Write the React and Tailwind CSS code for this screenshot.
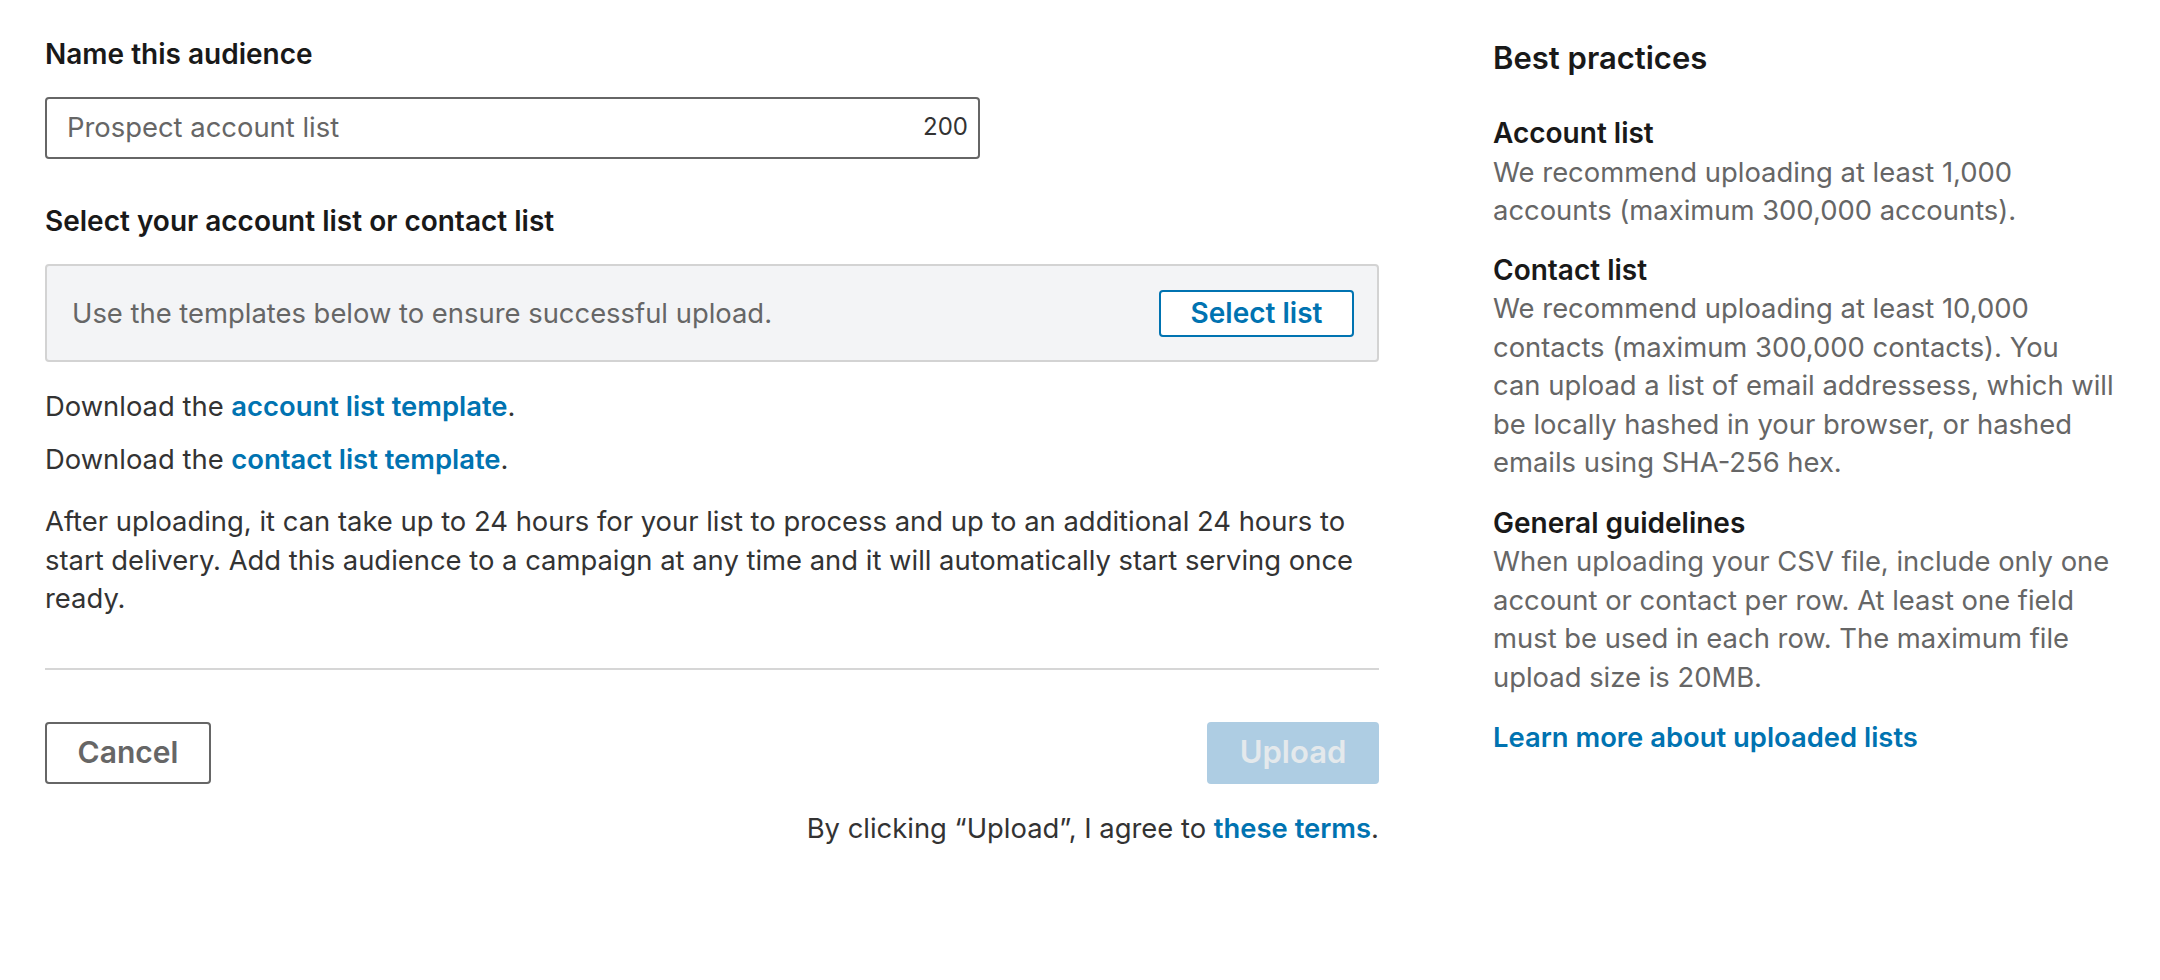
import React from "react";

export default function App() {
  return (
    <div className="w-[2160px] h-[980px] bg-white font-['Inter',sans-serif] text-[27.4px] leading-[38.5px] text-[#666666]">
      <div className="flex px-[45px]">
        {/* Left column */}
        <div className="w-[1334px] shrink-0 flex flex-col pt-[35px]">
          <div className="font-semibold text-[28px] text-[#191919]">Name this audience</div>
          <div className="mt-[23px] w-[935px] h-[62px] border-2 border-[#666666] rounded-[4px] flex items-center justify-between pl-[20px] pr-[10px]">
            <span className="text-[#666666]">Prospect account list</span>
            <span className="text-[24px] text-[#333333]">200</span>
          </div>
          <div className="mt-[43px] font-semibold text-[28px] text-[#191919]">Select your account list or contact list</div>
          <div className="mt-[24px] h-[98px] bg-[#f3f4f6] border-2 border-[#d3d3d3] rounded-[4px] flex items-center justify-between pl-[25px] pr-[23px]">
            <span className="text-[#666666]">Use the templates below to ensure successful upload.</span>
            <button className="w-[195px] h-[47px] border-2 border-[#0073b1] rounded-[4px] text-[#0073b1] font-semibold text-[28px] flex items-center justify-center bg-white">
              Select list
            </button>
          </div>
          <div className="mt-[25px] text-[#333333]">
            Download the <span className="text-[#0073b1] font-semibold">account list template</span>.
          </div>
          <div className="mt-[14px] text-[#333333]">
            Download the <span className="text-[#0073b1] font-semibold">contact list template</span>.
          </div>
          <p className="mt-[24px] text-[#333333] whitespace-nowrap">
            After uploading, it can take up to 24 hours for your list to process and up to an additional 24 hours to
            <br />
            start delivery. Add this audience to a campaign at any time and it will automatically start serving once
            <br />
            ready.
          </p>
          <div className="mt-[50px] h-[2px] bg-[#d6d6d6]" />
          <div className="mt-[52px] flex justify-between">
            <button className="w-[166px] h-[62px] border-2 border-[#666666] rounded-[4px] text-[#666666] font-semibold text-[30px] flex items-center justify-center">
              Cancel
            </button>
            <button className="w-[172px] h-[62px] rounded-[4px] bg-[#aecde3] text-[#e4e9ec] font-semibold text-[31px] flex items-center justify-center">
              Upload
            </button>
          </div>
          <div className="mt-[25px] text-right text-[#333333]">
            By clicking “Upload”, I agree to <span className="text-[#0073b1] font-semibold">these terms</span>.
          </div>
        </div>

        {/* Right column */}
        <div className="ml-[114px] w-[620px] shrink-0 flex flex-col pt-[37px] whitespace-nowrap">
          <div className="text-[31px] leading-[42px] font-semibold text-[#191919]">Best practices</div>
          <div className="mt-[35px] font-semibold text-[28px] text-[#191919]">Account list</div>
          <div>
            We recommend uploading at least 1,000
            <br />
            accounts (maximum 300,000 accounts).
          </div>
          <div className="mt-[21px] font-semibold text-[28px] text-[#191919]">Contact list</div>
          <div>
            We recommend uploading at least 10,000
            <br />
            contacts (maximum 300,000 contacts). You
            <br />
            can upload a list of email addressess, which will
            <br />
            be locally hashed in your browser, or hashed
            <br />
            emails using SHA-256 hex.
          </div>
          <div className="mt-[22px] font-semibold text-[28px] text-[#191919]">General guidelines</div>
          <div>
            When uploading your CSV file, include only one
            <br />
            account or contact per row. At least one field
            <br />
            must be used in each row. The maximum file
            <br />
            upload size is 20MB.
          </div>
          <div className="mt-[22px] font-semibold text-[#0073b1]">Learn more about uploaded lists</div>
        </div>
      </div>
    </div>
  );
}
